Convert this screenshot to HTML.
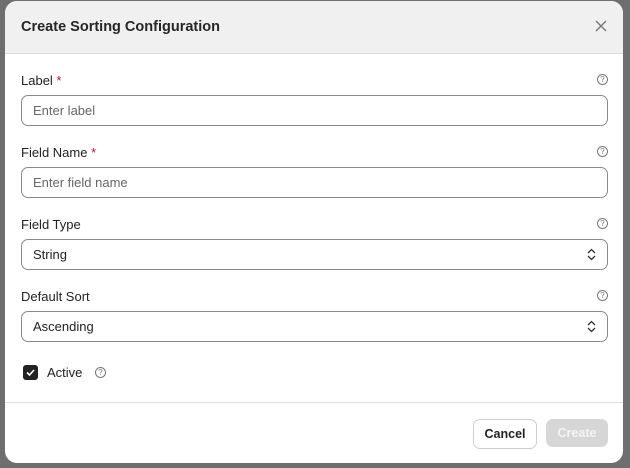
<!DOCTYPE html>
<html><head><style>
body{margin:0;width:630px;height:468px;background:#6e6e6e;font-family:"Liberation Sans",sans-serif;position:relative;overflow:hidden}
.m{position:absolute;left:5px;top:1px;width:618px;height:462px;background:#fff;border-radius:12px;overflow:hidden}
.h{height:52px;background:#f0f0f0;border-bottom:1px solid #dcdcdc;position:relative}
.h .t{position:absolute;left:16px;top:18px;font-size:14.5px;font-weight:bold;color:#262626}
.x{position:absolute;right:16px;top:19px}
.lb{position:absolute;left:16px;font-size:13px;color:#222}
.lb b{color:#c0142a;font-weight:normal}
.q{position:absolute;right:15px;width:9px;height:9px;border:1px solid #777;border-radius:50%;font-size:8px;line-height:9px;text-align:center;color:#777}
.in{position:absolute;left:16px;width:585px;height:29px;border:1px solid #8a8a8a;border-radius:7px;font-size:13px;color:#666;line-height:29px;padding-left:11px;box-sizing:content-box;width:574px}
.sel{color:#222}
.ar{position:absolute;right:11px;top:8px}
.f{position:absolute;left:0;right:0;top:401px;border-top:1px solid #dcdcdc}
.btn{position:absolute;top:418px;height:28px;border-radius:7px;font-size:12.5px;font-weight:bold;line-height:28px;text-align:center}
</style></head><body>
<div class="m">
<div class="h"><div class="t">Create Sorting Configuration</div>
<svg class="x" width="12" height="12" viewBox="0 0 12 12"><path d="M1 1L11 11M11 1L1 11" stroke="#777" stroke-width="1.4"/></svg></div>
<div class="lb" style="top:72px">Label <b>*</b></div><div class="q" style="top:73px">?</div>
<div class="in" style="top:94px">Enter label</div>
<div class="lb" style="top:144px">Field Name <b>*</b></div><div class="q" style="top:145px">?</div>
<div class="in" style="top:166px">Enter field name</div>
<div class="lb" style="top:216px">Field Type</div><div class="q" style="top:217px">?</div>
<div class="in sel" style="top:238px">String<svg class="ar" width="9" height="13" viewBox="0 0 9 13"><path d="M1 5L4.5 1.5L8 5M1 8L4.5 11.5L8 8" fill="none" stroke="#333" stroke-width="1.3"/></svg></div>
<div class="lb" style="top:288px">Default Sort</div><div class="q" style="top:289px">?</div>
<div class="in sel" style="top:310px">Ascending<svg class="ar" width="9" height="13" viewBox="0 0 9 13"><path d="M1 5L4.5 1.5L8 5M1 8L4.5 11.5L8 8" fill="none" stroke="#333" stroke-width="1.3"/></svg></div>
<div style="position:absolute;left:18px;top:364px;width:15px;height:15px;background:#222;border-radius:3px"><svg width="15" height="15" viewBox="0 0 15 15"><path d="M4 7.5L6.5 10L11 5" fill="none" stroke="#fff" stroke-width="1.6"/></svg></div>
<div class="lb" style="left:42px;top:364px">Active</div>
<div class="q" style="left:90px;top:366px">?</div>
<div class="f"></div>
<div class="btn" style="left:468px;width:62px;border:1px solid #ccc;color:#222">Cancel</div>
<div class="btn" style="left:541px;width:62px;background:#d6d6d6;color:#f4f4f4">Create</div>
</div>
</body></html>
